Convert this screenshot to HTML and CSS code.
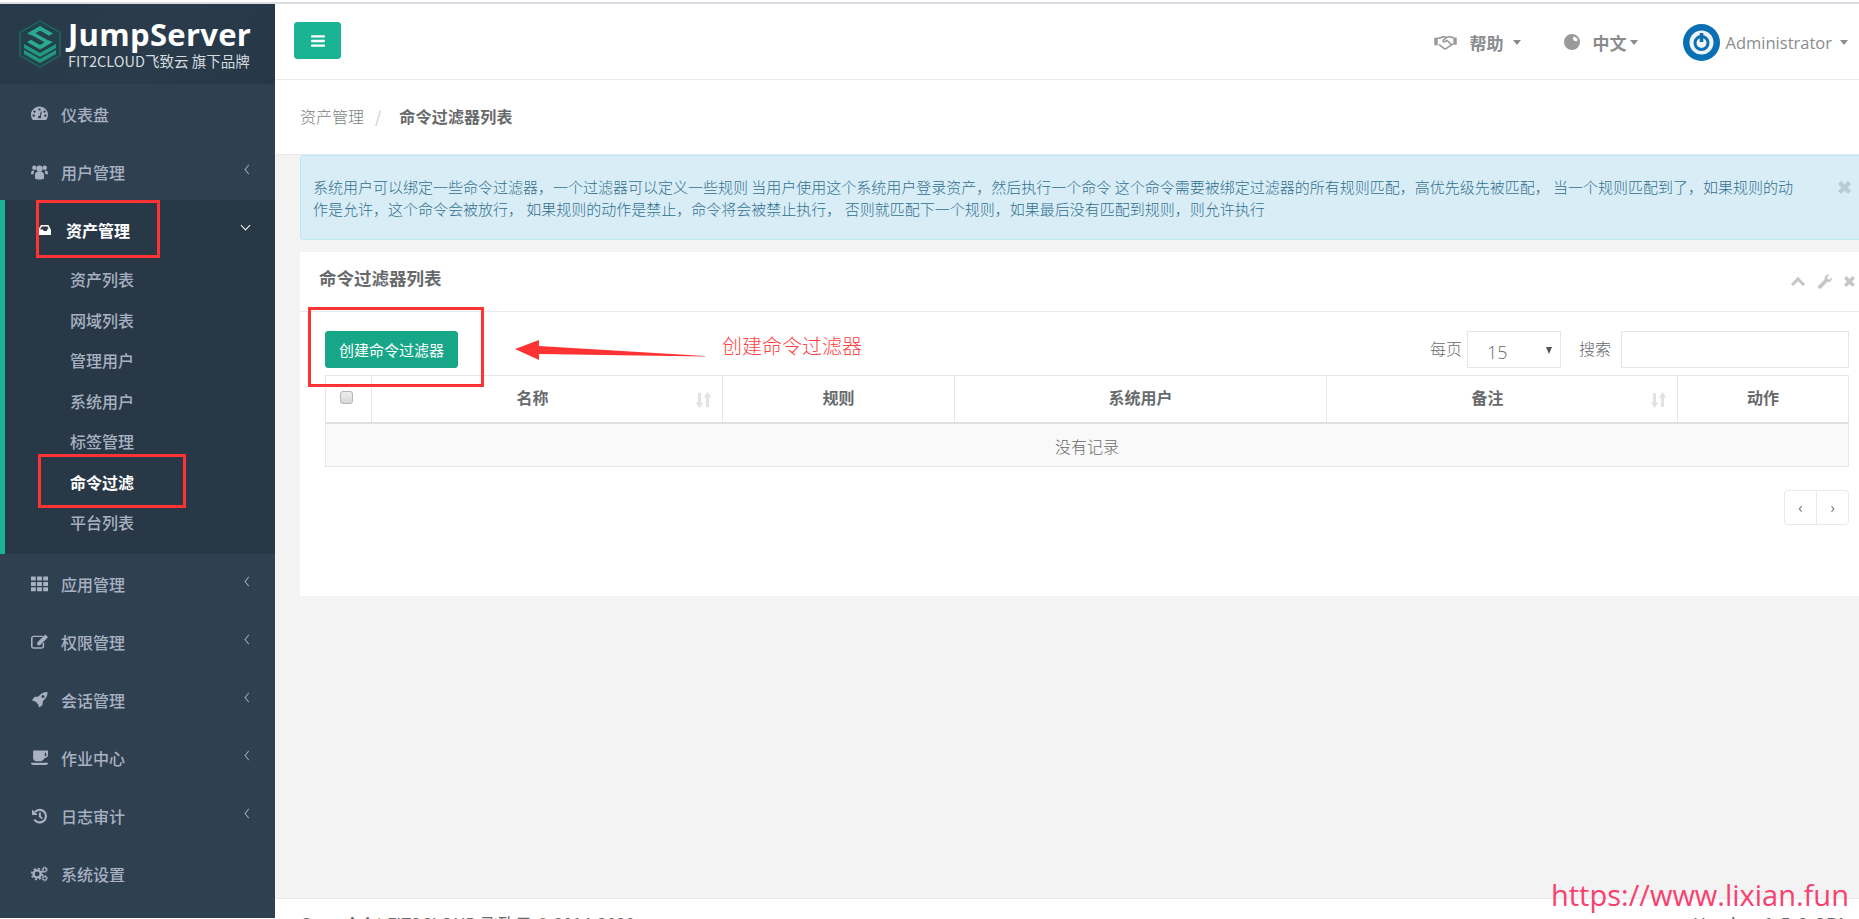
FILE: index.html
```html
<!DOCTYPE html>
<html lang="zh-CN">
<head>
    <meta charset="UTF-8">
    <title>命令过滤器列表</title>
    <link rel="stylesheet" href="styles.css">
</head>
<body>
    <svg class="defs" width="0" height="0">
        <symbol id="i-dashboard" viewBox="0 0 16 14"><path fill-rule="evenodd" d="M8 0C3.600 0 0 3.500 0 7.800c0 1.500.4 3 1.200 4.200.2.400.5.600.9.600h11.800c.4 0 .7-.2.9-.6.8-1.200 1.200-2.700 1.200-4.200C16 3.500 12.400 0 8 0zM7 1.800h2v2H7zM3.200 3.400l1.400 1.400-1.300 1.300-1.400-1.400zM12.800 3.400l1.300 1.300-1.400 1.400-1.300-1.300zM1.500 7.500h2v2h-2zM12.500 7.500h2v2h-2zM9.400 4.500l.9.300-1.100 4.300c.5.500.6 1.300.2 1.800H6.900c-.5-.6-.4-1.500.3-2 .3-.2.700-.3 1-.2z"/></symbol>
        <symbol id="i-users" viewBox="0 0 18 16"><circle cx="9" cy="4.500" r="3.300"/><circle cx="3.500" cy="3.500" r="2.300"/><circle cx="14.500" cy="3.500" r="2.300"/><path d="M4.200 15V11c0-2.400 1.800-3.500 4.800-3.500s4.800 1.100 4.800 3.500v4c-1 .7-2.800 1-4.800 1s-3.800-.3-4.800-1z"/><path d="M3.600 6.800c-.6.800-.8 2-.8 3.700H1c-.6 0-1-.3-1-.9C0 7.300.9 6.300 2.200 6.300c.5 0 1 .2 1.400.5zM14.400 6.800c.6.800.8 2 .8 3.700H17c.6 0 1-.3 1-.9 0-2.300-.9-3.300-2.200-3.300-.5 0-1 .2-1.400.5z"/></symbol>
        <symbol id="i-inbox" viewBox="0 0 12 12"><path fill-rule="evenodd" d="M2 1h7.500L12 6v5H0V4.500zM1 5.500h3l.7 1.500h3L8.500 5h1L8.500 2.500H3z"/></symbol>
        <symbol id="i-th" viewBox="0 0 16 14"><path d="M0 0h4.500v3.800H0zM5.700 0h4.600v3.800H5.700zM11.500 0H16v3.800h-4.500zM0 5h4.500v3.800H0zM5.700 5h4.600v3.800H5.700zM11.500 5H16v3.800h-4.500zM0 10h4.500v3.800H0zM5.700 10h4.600v3.800H5.700zM11.500 10H16v3.800h-4.500z"/></symbol>
        <symbol id="i-edit" viewBox="0 0 16 14"><path fill-rule="evenodd" d="M2.500 1H11v1.400H2.500c-.6 0-1 .4-1 1V11c0 .6.400 1 1 1h7.500c.6 0 1-.4 1-1V8.500l1.400-1.300V11c0 1.400-1.100 2.400-2.400 2.400H2.500C1.100 13.400 0 12.400 0 11V3.400C0 2.100 1.100 1 2.500 1z"/><path d="M13.400 0L16 2.600 8.500 10.100H5.900V7.500z"/></symbol>
        <symbol id="i-rocket" viewBox="0 0 16 16"><path fill-rule="evenodd" d="M16 0c.1 3.700-1.300 6.500-4.500 9l-.6 4.200L7.500 15.500l-.9-3.300-2.800-2.800L.5 8.500l2.300-3.400L7 4.500C9.500 1.300 12.300-.1 16 0zM11.500 3a1.500 1.500 0 1 0 0 3 1.500 1.500 0 0 0 0-3z"/></symbol>
        <symbol id="i-coffee" viewBox="0 0 16 14"><path fill-rule="evenodd" d="M2 0h14v.3V4c0 2-1.500 3.300-3.300 3.300H12.500C12 9 10.500 10 9 10H5c-1.700 0-3-1.300-3-3zM13 1.800v3.700c.9 0 1.500-.6 1.500-1.800s-.6-1.900-1.500-1.900zM0 11.400h16c0 1.300-.8 2.100-2 2.100H2c-1.200 0-2-.8-2-2.100z"/></symbol>
        <symbol id="i-history" viewBox="0 0 16 16"><path fill="none" stroke="currentColor" stroke-width="2.200" d="M3.400 4A6.300 6.300 0 1 1 2.800 11.500"/><path d="M.5 1.500L6.300 7H.5z"/><path d="M7.400 4.500h2v3.700l2 1.500-1 1.500-3-2.100z"/></symbol>
        <symbol id="i-cogs" viewBox="0 0 18 16"><circle cx="6.500" cy="8" r="3.800" fill="none" stroke="currentColor" stroke-width="2.500"/><circle cx="6.500" cy="8" r="5.700" fill="none" stroke="currentColor" stroke-width="1.800" stroke-dasharray="2.200 2.280"/><circle cx="14.500" cy="3.500" r="1.900" fill="none" stroke="currentColor" stroke-width="1.300"/><circle cx="14.500" cy="12.500" r="1.900" fill="none" stroke="currentColor" stroke-width="1.300"/><circle cx="14.500" cy="3.500" r="3" fill="none" stroke="currentColor" stroke-width=".9" stroke-dasharray="1.200 1.160"/><circle cx="14.500" cy="12.500" r="3" fill="none" stroke="currentColor" stroke-width=".9" stroke-dasharray="1.200 1.160"/></symbol>
        <symbol id="i-hand" viewBox="0 0 24 16"><path fill="none" stroke="currentColor" stroke-width="1.700" stroke-linejoin="round" stroke-linecap="round" d="M5 3.500l4.500-1.500c1.500-.4 2.300 0 3.500.7l2.500-.9c1-.3 2 0 3 .7h1.500M12.800 2.900L9.500 5.600c-.7.8.5 2.300 2 1.400l2-1.400 5.300 5M5 3.500H3.500M5.500 10.500l4.800 3.700c.9.700 2 .7 2.600 0l5.500-3.600 1.100-.8"/><path d="M0 3h3.700v7.800H0zM20.300 2.700H24v7.800h-3.700z"/></symbol>
        <symbol id="i-globe" viewBox="0 0 16 16"><path fill-rule="evenodd" d="M8 0a8 8 0 1 1 0 16A8 8 0 0 1 8 0zM9.500 2.500L8.800 4.500l1.200 2.300 2.800.4.800-1.500C13 4 11.500 2.800 9.500 2.500z"/></symbol>
        <symbol id="i-wrench" viewBox="0 0 16 16"><path d="M15.800 3.500c.4 1.800-.2 3.400-1.600 4.400-1 .7-2.300.9-3.400.6L5 14.800c-1 1-2.400 1.200-3.300.4-.9-.9-.8-2.300.2-3.300l6.300-6C7.800 4.800 8 3.500 8.800 2.500 9.900 1 11.500.3 13.300.6L10.800 3.400l.6 2 2 .5z"/></symbol>
        <symbol id="i-close" viewBox="0 0 12 12"><path d="M2.800 0L6 3.200 9.200 0 12 2.800 8.800 6 12 9.200 9.200 12 6 8.800 2.800 12 0 9.200 3.200 6 0 2.800z"/></symbol>
        <symbol id="i-sort" viewBox="0 0 16 16"><path d="M3 1h3v9.500h2.300L4.500 16 .7 10.500H3zM12.600 0l3.700 5.500H14V15h-3V5.500H8.800z"/></symbol>
    </svg>

    <div class="top-strip"></div>
    <div class="page">
        <nav class="sidebar">
            <div class="logo">
                <svg class="logo-mark" viewBox="0 0 42 48" width="42" height="48">
                    <path d="M21 1L41 12.500v23L21 47 1 35.500v-23z" fill="#24404a" stroke="#1c6d62" stroke-width="1.300"/>
                    <path d="M5 24l16 9 16-9v4l-16 9-16-9z" fill="#1f9a80"/>
                    <path d="M5 30l16 9 16-9v4l-16 9-16-9z" fill="#1f9a80"/>
                    <path d="M21 6l13 7.500-4 2.300-9-5.200-4.500 2.600 11 6.300L34 22 21 29.500 8 22l4-2.300 9 5.200 4.500-2.600-11-6.300L8 13.500z" fill="#2aab8f"/>
                </svg>
                <div class="logo-text">
                    <div class="logo-name">JumpServer</div>
                    <div class="logo-sub">FIT2CLOUD飞致云 旗下品牌</div>
                </div>
            </div>
            <ul class="menu">
                <li class="menu-item"><svg class="menu-icon"><use href="#i-dashboard"/></svg><span>仪表盘</span></li>
                <li class="menu-item"><svg class="menu-icon"><use href="#i-users"/></svg><span>用户管理</span><i class="arrow-left"></i></li>
                <li class="menu-group">
                    <div class="menu-item menu-item-open"><svg class="menu-icon-small"><use href="#i-inbox"/></svg><span>资产管理</span><i class="arrow-down"></i></div>
                    <ul class="submenu">
                        <li>资产列表</li>
                        <li>网域列表</li>
                        <li>管理用户</li>
                        <li>系统用户</li>
                        <li>标签管理</li>
                        <li class="current">命令过滤</li>
                        <li>平台列表</li>
                    </ul>
                </li>
                <li class="menu-item"><svg class="menu-icon"><use href="#i-th"/></svg><span>应用管理</span><i class="arrow-left"></i></li>
                <li class="menu-item"><svg class="menu-icon"><use href="#i-edit"/></svg><span>权限管理</span><i class="arrow-left"></i></li>
                <li class="menu-item"><svg class="menu-icon"><use href="#i-rocket"/></svg><span>会话管理</span><i class="arrow-left"></i></li>
                <li class="menu-item"><svg class="menu-icon"><use href="#i-coffee"/></svg><span>作业中心</span><i class="arrow-left"></i></li>
                <li class="menu-item"><svg class="menu-icon"><use href="#i-history"/></svg><span>日志审计</span><i class="arrow-left"></i></li>
                <li class="menu-item"><svg class="menu-icon"><use href="#i-cogs"/></svg><span>系统设置</span></li>
            </ul>
        </nav>

        <main class="main">
            <header class="navbar">
                <button class="toggle-btn">
                    <svg width="16" height="16" viewBox="0 0 1792 1792" fill="#fff"><path d="M1664 1344v128q0 26-19 45t-45 19h-1408q-26 0-45-19t-19-45v-128q0-26 19-45t45-19h1408q26 0 45 19t19 45zm0-512v128q0 26-19 45t-45 19h-1408q-26 0-45-19t-19-45v-128q0-26 19-45t45-19h1408q26 0 45 19t19 45zm0-512v128q0 26-19 45t-45 19h-1408q-26 0-45-19t-19-45v-128q0-26 19-45t45-19h1408q26 0 45 19t19 45z"/></svg>
                </button>
                <div class="nav-right">
                    <div class="nav-link nav-help"><svg class="icon-hand"><use href="#i-hand"/></svg><b>帮助</b><i class="caret"></i></div>
                    <div class="nav-link nav-lang"><svg class="icon-globe"><use href="#i-globe"/></svg><b>中文</b><i class="caret caret-tight"></i></div>
                    <div class="nav-link nav-user">
                        <svg class="avatar" viewBox="0 0 37 37">
                            <circle cx="18.500" cy="18.500" r="18.500" fill="#0a6fb4"/>
                            <circle cx="18.500" cy="18.500" r="12" fill="#f1f4f6"/>
                            <circle cx="18.500" cy="19" r="6.500" fill="none" stroke="#0a6fb4" stroke-width="3"/>
                            <rect x="16.700" y="9" width="3.600" height="9" fill="#0a6fb4"/>
                        </svg>
                        <span>Administrator</span><i class="caret"></i>
                    </div>
                </div>
            </header>

            <div class="page-heading">
                <span class="crumb">资产管理</span>
                <span class="crumb-sep">/</span>
                <strong class="crumb-active">命令过滤器列表</strong>
            </div>

            <div class="wrapper">
                <div class="alert">
                    系统用户可以绑定一些命令过滤器，一个过滤器可以定义一些规则 当用户使用这个系统用户登录资产，然后执行一个命令 这个命令需要被绑定过滤器的所有规则匹配，高优先级先被匹配， 当一个规则匹配到了，如果规则的动作是允许，这个命令会被放行， 如果规则的动作是禁止，命令将会被禁止执行， 否则就匹配下一个规则，如果最后没有匹配到规则，则允许执行
                    <svg class="alert-close"><use href="#i-close"/></svg>
                </div>

                <section class="card">
                    <div class="card-title">
                        <h5>命令过滤器列表</h5>
                        <div class="card-tools">
                            <i class="arrow-up"></i>
                            <svg class="tool-icon"><use href="#i-wrench"/></svg>
                            <svg class="tool-close"><use href="#i-close"/></svg>
                        </div>
                    </div>
                    <div class="card-body">
                        <div class="toolbar">
                            <button class="create-btn">创建命令过滤器</button>
                            <div class="filters">
                                <label>每页</label>
                                <div class="page-size"><span>15</span><i class="select-arrow"></i></div>
                                <label class="search-label">搜索</label>
                                <input class="search-input" type="text">
                            </div>
                        </div>
                        <table class="data-table">
                            <colgroup>
                                <col class="col-check"><col class="col-name"><col class="col-rule"><col class="col-user"><col class="col-note"><col class="col-action">
                            </colgroup>
                            <thead>
                                <tr>
                                    <th><span class="fake-check"></span></th>
                                    <th class="sortable">名称<svg class="sort-icon"><use href="#i-sort"/></svg></th>
                                    <th>规则</th>
                                    <th>系统用户</th>
                                    <th class="sortable">备注<svg class="sort-icon"><use href="#i-sort"/></svg></th>
                                    <th>动作</th>
                                </tr>
                            </thead>
                            <tbody>
                                <tr><td colspan="6">没有记录</td></tr>
                            </tbody>
                        </table>
                        <div class="pager">
                            <span>‹</span><span>›</span>
                        </div>
                    </div>
                </section>
            </div>

            <footer class="footer">
                <div><strong>Copyright</strong> FIT2CLOUD 飞致云 © 2014-2020</div>
                <div class="footer-version">Version <strong>1.5.8 GPL</strong></div>
            </footer>
        </main>
    </div>

    <!-- 截图上的标注 -->
    <div class="mark mark-menu"></div>
    <div class="mark mark-sub"></div>
    <div class="mark mark-btn"></div>
    <svg class="mark-arrow" width="192" height="24" viewBox="0 0 192 24"><path d="M0 11L24 2v6l166 10v.6L24 16v6z" fill="#ff3333"/></svg>
    <div class="mark-text">创建命令过滤器</div>
    <div class="watermark">https://www.lixian.fun</div>
</body>
</html>
```

FILE: styles.css
```css
* {
    margin: 0;
    padding: 0;
    box-sizing: border-box;
}

html, body {
    height: 919px;
    overflow: hidden;
}

body {
    font-family: "Noto Sans CJK SC", "Liberation Sans", sans-serif;
    font-size: 15px;
    color: #676a6c;
    background: #fff;
    position: relative;
}

ul {
    list-style: none;
}

.defs {
    position: absolute;
}

.top-strip {
    height: 4px;
    border-bottom: 2px solid #dddde6;
}

.page {
    display: flex;
    height: 915px;
}

/* sidebar */
.sidebar {
    width: 275px;
    height: 914px;
    flex-shrink: 0;
    background: #2f4050;
    color: #a7b1c2;
}

.logo {
    height: 80px;
    background: linear-gradient(120deg, #283a4a 0%, #2a3c4c 55%, #263848 100%);
    display: flex;
    align-items: center;
    padding: 0 0 0 19px;
    gap: 7px;
}

.logo-mark {
    flex-shrink: 0;
}

.logo-text {
    margin-top: -4px;
}

.logo-name {
    font-family: "Open Sans", sans-serif;
    font-weight: 700;
    font-size: 31px;
    line-height: 36px;
    color: #fff;
    letter-spacing: 0.3px;
}

.logo-sub {
    font-size: 14.500px;
    line-height: 17px;
    color: #d5dade;
    white-space: nowrap;
}

.menu-item {
    height: 58px;
    display: flex;
    align-items: center;
    padding-left: 31px;
    padding-top: 2px;
    font-size: 16px;
    font-weight: 500;
    position: relative;
}

.menu-icon {
    width: 17px;
    height: 16px;
    margin-right: 13px;
    fill: currentColor;
    color: #a7b1c2;
}

.menu-icon-small {
    width: 12px;
    height: 12px;
    margin: 0 15px 0 0;
    fill: #fff;
}

.menu-group {
    background: #293846;
    border-left: 5px solid #1ab394;
    height: 354px;
}

.menu-item-open {
    color: #fff;
    padding-left: 34px;
    font-weight: 700;
}

.arrow-left,
.arrow-down {
    position: absolute;
    width: 7px;
    height: 7px;
    border-left: 1.500px solid #a7b1c2;
    border-bottom: 1.500px solid #a7b1c2;
}

.arrow-left {
    right: 23px;
    top: 24px;
    transform: scaleX(0.8) rotate(45deg);
}

.arrow-down {
    right: 26px;
    top: 22px;
    border-color: #fff;
    transform: rotate(-45deg);
}

.submenu li {
    height: 40.500px;
    line-height: 42px;
    padding-left: 65px;
    font-size: 16px;
    font-weight: 500;
}

.submenu .current {
    color: #fff;
    font-weight: 700;
}

/* main */
.main {
    flex: 1;
    min-width: 0;
    display: flex;
    flex-direction: column;
    background: #f3f3f4;
}

.navbar {
    height: 76px;
    flex-shrink: 0;
    background: #fff;
    border-bottom: 1px solid #e7eaec;
    display: flex;
    align-items: flex-start;
    justify-content: space-between;
    padding-left: 19px;
}

.toggle-btn {
    width: 47px;
    height: 37px;
    margin-top: 18px;
    background: #1ab394;
    border: 1px solid #1ab394;
    border-radius: 3px;
    display: flex;
    align-items: center;
    justify-content: center;
}

.nav-right {
    display: flex;
    align-items: center;
    height: 75px;
    padding: 1px 11px 0 0;
    color: #8a8c8e;
}

.nav-link {
    display: flex;
    align-items: center;
}

.nav-link b {
    font-size: 17px;
    font-weight: 700;
}

.icon-hand {
    width: 23px;
    height: 15px;
    margin-right: 13px;
    fill: currentColor;
    color: #999;
}

.icon-globe {
    width: 16px;
    height: 16px;
    margin-right: 13px;
    fill: #9a9a9a;
}

.caret {
    width: 0;
    height: 0;
    margin-left: 9px;
    border-top: 5px solid #8a8c8e;
    border-left: 4.500px solid transparent;
    border-right: 4.500px solid transparent;
}

.caret-tight {
    margin-left: 3px;
}

.nav-help {
    margin-right: 43px;
}

.nav-lang {
    margin-right: 45px;
}

.avatar {
    width: 37px;
    height: 37px;
    margin-right: 6px;
}

.nav-user span {
    font-family: "Open Sans", sans-serif;
    font-size: 16.500px;
}

.nav-user .caret {
    margin-left: 8px;
}

.page-heading {
    height: 75px;
    flex-shrink: 0;
    background: #fff;
    border-bottom: 1px solid #e7eaec;
    display: flex;
    align-items: center;
    padding: 0 0 2px 25px;
    font-size: 16px;
}

.crumb {
    color: #7d7f81;
    font-weight: 300;
}

.crumb-sep {
    margin: 0 18px 0 11px;
    color: #ccc;
}

.crumb-active {
    font-weight: 700;
    color: #676a6c;
    letter-spacing: 0.2px;
}

.wrapper {
    padding-left: 25px;
    flex: 1;
}

.alert {
    height: 85px;
    padding: 20px 55px 0 12px;
    background: #d9edf7;
    border: 1px solid #bce8f1;
    border-right: none;
    border-radius: 4px 0 0 4px;
    color: #31708f;
    line-height: 22px;
    position: relative;
    font-weight: 300;
}

.alert-close {
    position: absolute;
    right: 8px;
    top: 25px;
    width: 13px;
    height: 13px;
    fill: #b6cdd8;
}

.card {
    margin-top: 12px;
    height: 344px;
    background: #fff;
}

.card-title {
    height: 60px;
    border-bottom: 1px solid #e7eaec;
    display: flex;
    align-items: center;
    justify-content: space-between;
    padding: 0 4px 8px 19px;
}

.card-title h5 {
    font-size: 17.500px;
    font-weight: 700;
}

.card-tools {
    display: flex;
    align-items: center;
    margin-top: 7px;
    color: #c4c6c7;
}

.arrow-up {
    width: 10px;
    height: 10px;
    margin: 5px 14px 0 0;
    border-left: 3px solid #c4c6c7;
    border-top: 3px solid #c4c6c7;
    transform: rotate(45deg);
}

.tool-icon {
    width: 15px;
    height: 15px;
    margin-right: 12px;
    fill: #c4c6c7;
}

.tool-close {
    width: 11px;
    height: 11px;
    fill: #c4c6c7;
}

.card-body {
    padding: 19px 10px 0 25px;
}

.toolbar {
    display: flex;
    justify-content: space-between;
    height: 44px;
}

.create-btn {
    width: 133px;
    height: 37px;
    background: #18a689;
    border: 1px solid #18a689;
    border-radius: 3px;
    color: #fff;
    font-family: inherit;
    font-size: 15px;
}

.filters {
    display: flex;
    align-items: flex-start;
    font-weight: 300;
    font-size: 16px;
}

.filters label {
    line-height: 34px;
    margin-right: 5px;
}

.filters .search-label {
    margin: 0 10px 0 18px;
}

.page-size {
    width: 94px;
    height: 37px;
    border: 1px solid #e5e6e7;
    position: relative;
    padding-left: 19px;
    line-height: 40px;
    font-family: "Open Sans", sans-serif;
    font-size: 18px;
}

.select-arrow {
    position: absolute;
    right: 8px;
    top: 15px;
    border-top: 7px solid #555;
    border-left: 3.500px solid transparent;
    border-right: 3.500px solid transparent;
}

.search-input {
    width: 228px;
    height: 37px;
    border: 1px solid #e5e6e7;
}

.data-table {
    width: 1523px;
    border-collapse: collapse;
    table-layout: fixed;
    font-size: 16px;
}

.col-check { width: 46px; }
.col-name { width: 351px; }
.col-rule { width: 232px; }
.col-user { width: 372px; }
.col-note { width: 351px; }
.col-action { width: 171px; }

.data-table th {
    height: 47px;
    padding-bottom: 3px;
    border: 1px solid #e7e7e7;
    border-bottom: 2px solid #e0e0e0;
    font-weight: 700;
    text-align: center;
    position: relative;
}

.data-table .sortable {
    padding-right: 29px;
}

.data-table td {
    height: 44px;
    padding-top: 2px;
    border: 1px solid #e7e7e7;
    background: #f9f9f9;
    text-align: center;
    font-size: 16px;
    font-weight: 300;
}

.fake-check {
    display: block;
    width: 13px;
    height: 13px;
    margin: 0 0 0 14px;
    border: 1px solid #b5b5b5;
    border-radius: 3px;
    background: linear-gradient(#eee, #d8d8d8);
}

.sort-icon {
    position: absolute;
    right: 11px;
    top: 16px;
    width: 16px;
    height: 16px;
    fill: #e2e2e2;
}

.pager {
    display: flex;
    justify-content: flex-end;
    margin-top: 23px;
}

.pager span {
    width: 33px;
    height: 35px;
    border: 1px solid #e7eaec;
    text-align: center;
    line-height: 31px;
    font-size: 15px;
    color: #676a6c;
}

.pager span:first-child {
    width: 32px;
    border-radius: 4px 0 0 4px;
    border-right: none;
}

.pager span:last-child {
    border-radius: 0 4px 4px 0;
}

.footer {
    height: 21px;
    flex-shrink: 0;
    overflow: hidden;
    background: #fff;
    border-top: 1px solid #e7eaec;
    display: flex;
    justify-content: space-between;
    padding: 13px 10px 0 25px;
    font-size: 17px;
    line-height: 24px;
}

.footer-version {
    letter-spacing: 0.800px;
}

/* annotations drawn on the screenshot */
.mark {
    position: absolute;
    border: 3px solid #ff3333;
}

.mark-menu {
    left: 36px;
    top: 200px;
    width: 124px;
    height: 58px;
}

.mark-sub {
    left: 38px;
    top: 454px;
    width: 148px;
    height: 54px;
}

.mark-btn {
    left: 308px;
    top: 307px;
    width: 176px;
    height: 80px;
}

.mark-arrow {
    position: absolute;
    left: 515px;
    top: 338px;
}

.mark-text {
    position: absolute;
    left: 722px;
    top: 331px;
    font-size: 20px;
    line-height: 30px;
    font-weight: 300;
    color: #ff4444;
}

.watermark {
    position: absolute;
    left: 1551px;
    top: 874px;
    font-family: "Open Sans", sans-serif;
    font-size: 29px;
    line-height: 42px;
    color: #f8416f;
    white-space: nowrap;
}
```
